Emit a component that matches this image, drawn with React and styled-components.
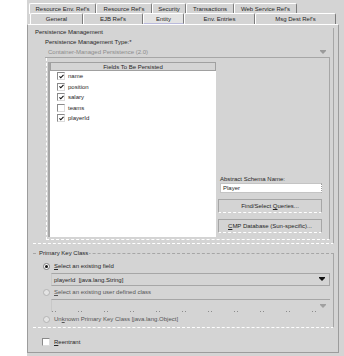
import React from "react";
import styled, { createGlobalStyle } from "styled-components";

const Global = createGlobalStyle`
  html, body { margin: 0; padding: 0; background: #fff; }
  body {
    font-family: "Liberation Sans", Arial, sans-serif;
    font-size: 6px;
    color: #262626;
  }
`;

const Frame = styled.div`
  margin-left: 27px;
  width: 317px;
  height: 356px;
  box-sizing: border-box;
  padding-top: 3px;
  background: #d4d4d4;
  overflow: hidden;
`;

const TabRow = styled.div`
  display: flex;
  height: 11px;
  margin-left: ${(p) => p.$indent}px;
  margin-top: ${(p) => (p.$front ? -1 : 0)}px;
`;

const Tab = styled.div`
  width: ${(p) => p.$w}px;
  box-sizing: border-box;
  display: flex;
  align-items: center;
  justify-content: center;
  white-space: nowrap;
  background: ${(p) => (p.$active ? "#e3e3e3" : "#d4d4d4")};
  border-top: 1px solid #fff;
  border-left: 1px solid #fff;
  border-right: 1px solid #7c7c7c;
  border-bottom: ${(p) => (p.$active ? "1px solid #babadc" : "none")};
  border-radius: 2px 2px 0 0;
`;

const Panel = styled.div`
  width: 312px;
  height: 329px;
  box-sizing: border-box;
  display: flex;
  flex-direction: column;
  border-top: 1px solid #fff;
  border-left: 1px solid #9c9c9c;
  border-right: 1px solid #9c9c9c;
  border-bottom: 1px solid #9c9c9c;
`;

const PersistGroup = styled.div`
  margin: 3px 4px 0 5px;
  height: 216px;
  box-sizing: border-box;
  display: flex;
  flex-direction: column;
  border-right: 1px solid #a6a6a6;
  border-bottom: 1px dashed #fff;
`;

const GroupTitle = styled.div`
  height: 8px;
  line-height: 8px;
  padding-left: 2px;
`;

const FieldLabel = styled.div`
  height: 8px;
  line-height: 8px;
  margin: 2px 0 1px 12px;
`;

const TypeCombo = styled.div`
  height: 11px;
  box-sizing: border-box;
  margin: 0 3px 0 12px;
  padding-left: 3px;
  display: flex;
  align-items: center;
  color: #8c8c8c;
  border-bottom: 1px solid #a6a6a6;
`;

const DropArrow = styled.span`
  margin-left: auto;
  margin-right: 4px;
  width: 0;
  height: 0;
  border-left: 3px solid transparent;
  border-right: 3px solid transparent;
  border-top: 3px solid ${(p) => p.$c};
  box-shadow: 0 -1px 0 ${(p) => p.$c};
`;

const InnerBox = styled.div`
  margin: 0 3px 0 13px;
  height: 182px;
  box-sizing: border-box;
  display: flex;
  border-left: 1px dashed #fff;
  border-bottom: 1px dashed #fff;
  border-right: 1px solid #a6a6a6;
`;

const Table = styled.div`
  margin: 4px 0 0 1px;
  width: 168px;
  height: 175px;
  box-sizing: border-box;
  display: flex;
  flex-direction: column;
  border-left: 2px solid #a6a6a6;
`;

const TableHead = styled.div`
  height: 9px;
  box-sizing: border-box;
  display: flex;
  align-items: center;
  justify-content: center;
  border: 1px solid #a0a0a0;
  background: #d4d4d4;
`;

const TableBody = styled.div`
  flex: 1;
  background: #fff;
`;

const FieldRow = styled.div`
  height: 10.5px;
  display: flex;
  align-items: center;
  gap: 3px;
  padding-left: 7px;
`;

const Box = styled.span`
  width: 6px;
  height: 6px;
  display: inline-flex;
  align-items: center;
  justify-content: center;
  background: #fff;
  border: 1px solid #8a8a8a;
  border-right-color: #dcdcdc;
  border-bottom-color: #dcdcdc;
`;

const SideCol = styled.div`
  flex: 1;
  display: flex;
  flex-direction: column;
  justify-content: flex-end;
  padding: 0 7px 6px 4px;
`;

const SideLabel = styled.div`
  height: 8px;
  line-height: 8px;
`;

const TextField = styled.div`
  height: 10px;
  box-sizing: border-box;
  padding-left: 2px;
  display: flex;
  align-items: center;
  background: #fff;
  border: 1px solid #c4c4c4;
  border-right: 1px dotted #9a9a9a;
`;

const Button = styled.div`
  height: ${(p) => p.$h}px;
  margin: 6px 0 0 -2px;
  box-sizing: border-box;
  display: flex;
  align-items: center;
  justify-content: center;
  background: #d4d4d4;
  border: 1px solid #a6a6a6;
  border-bottom: 1px dashed #fff;
`;

const KeyGroup = styled.fieldset`
  margin: 5px 4px 0 5px;
  padding: 0 3px 4px 5px;
  min-width: 0;
  border: none;
  border-top: 1px dashed #a6a6a6;
  border-right: 1px solid #a6a6a6;
  border-bottom: 1px dashed #fff;
`;

const Legend = styled.legend`
  padding: 0 1px;
  height: 8px;
  line-height: 8px;
`;

const OptionRow = styled.div`
  height: 8px;
  margin-top: ${(p) => p.$mt}px;
  padding-left: 5px;
  display: flex;
  align-items: center;
  gap: 4px;
  color: ${(p) => (p.$dim ? "#555" : "#262626")};
`;

const Radio = styled.span`
  width: 7px;
  height: 7px;
  box-sizing: border-box;
  border-radius: 50%;
  display: inline-flex;
  align-items: center;
  justify-content: center;
  background: ${(p) => (p.$on ? "#fff" : "#e4e4e4")};
  border: 1px solid ${(p) => (p.$on ? "#7a7a7a" : "#b4b4b4")};
  &::after {
    content: "";
    width: 3px;
    height: 3px;
    border-radius: 50%;
    background: ${(p) => (p.$on ? "#111" : "transparent")};
  }
`;

const KeyCombo = styled.div`
  height: 13px;
  margin: 3px 0 0 13px;
  box-sizing: border-box;
  padding-left: 2px;
  display: flex;
  align-items: center;
  border: 1px solid #a6a6a6;
  border-left-color: #c8c8c8;
  ${(p) =>
    p.$empty &&
    `
    border-bottom: none;
    border-right: none;
    background: repeating-linear-gradient(to right, #8c8c8c 0 1px, transparent 1px 3px, #8c8c8c 3px 4px, transparent 4px 26px) left bottom / 100% 1px no-repeat;
  `}
`;

const ReentrantRow = styled.div`
  height: 8px;
  margin: 10px 0 0 14px;
  display: flex;
  align-items: center;
  gap: 4px;
`;

const U = styled.span`
  text-decoration: underline;
`;

const Check = () => (
  <svg width="5" height="5" viewBox="0 0 5 5">
    <path d="M0.5 2.4 L1.8 3.8 L4.5 0.8" fill="none" stroke="#111" strokeWidth="1.1" />
  </svg>
);

const backTabs = [
  ["Resource Env. Ref's", 67],
  ["Resource Ref's", 56],
  ["Security", 34],
  ["Transactions", 48],
  ["Web Service Ref's", 63],
];

const frontTabs = [
  ["General", 53],
  ["EJB Ref's", 60],
  ["Entity", 41, true],
  ["Env. Entries", 71],
  ["Msg Dest Ref's", 81],
];

const fields = [
  ["name", true],
  ["position", true],
  ["salary", true],
  ["teams", false],
  ["playerId", true],
];

export default function App() {
  return (
    <>
      <Global />
      <Frame>
        <TabRow $indent={2}>
          {backTabs.map(([t, w]) => (
            <Tab key={t} $w={w}>{t}</Tab>
          ))}
        </TabRow>
        <TabRow $indent={3} $front>
          {frontTabs.map(([t, w, a]) => (
            <Tab key={t} $w={w} $active={a}>{t}</Tab>
          ))}
        </TabRow>
        <Panel>
          <PersistGroup>
            <GroupTitle>Persistence Management</GroupTitle>
            <FieldLabel>Persistence Management Type:*</FieldLabel>
            <TypeCombo>
              Container-Managed Persistence (2.0)
              <DropArrow $c="#9a9a9a" />
            </TypeCombo>
            <InnerBox>
              <Table>
                <TableHead>Fields To Be Persisted</TableHead>
                <TableBody>
                  {fields.map(([f, on]) => (
                    <FieldRow key={f}>
                      <Box>{on && <Check />}</Box>
                      {f}
                    </FieldRow>
                  ))}
                </TableBody>
              </Table>
              <SideCol>
                <SideLabel>Abstract Schema Name:</SideLabel>
                <TextField>Player</TextField>
                <Button $h={14}>
                  <span>
                    Find/Select <U>Q</U>ueries...
                  </span>
                </Button>
                <Button $h={14}>
                  <span>
                    <U>C</U>MP Database (Sun-specific)...
                  </span>
                </Button>
              </SideCol>
            </InnerBox>
          </PersistGroup>
          <KeyGroup>
            <Legend>Primary Key Class</Legend>
            <OptionRow $mt={5}>
              <Radio $on />
              <span>
                <U>S</U>elect an existing field
              </span>
            </OptionRow>
            <KeyCombo>
              playerId&nbsp;&nbsp;[java.lang.String]
              <DropArrow $c="#111" />
            </KeyCombo>
            <OptionRow $mt={2} $dim>
              <Radio />
              <span>
                <U>S</U>elect an existing user defined class
              </span>
            </OptionRow>
            <KeyCombo $empty>
              <DropArrow $c="#a0a0a0" />
            </KeyCombo>
            <OptionRow $mt={3} $dim>
              <Radio />
              <span>
                Un<U>k</U>nown Primary Key Class [java.lang.Object]
              </span>
            </OptionRow>
          </KeyGroup>
          <ReentrantRow>
            <Box />
            <span>
              <U>R</U>eentrant
            </span>
          </ReentrantRow>
        </Panel>
      </Frame>
    </>
  );
}
